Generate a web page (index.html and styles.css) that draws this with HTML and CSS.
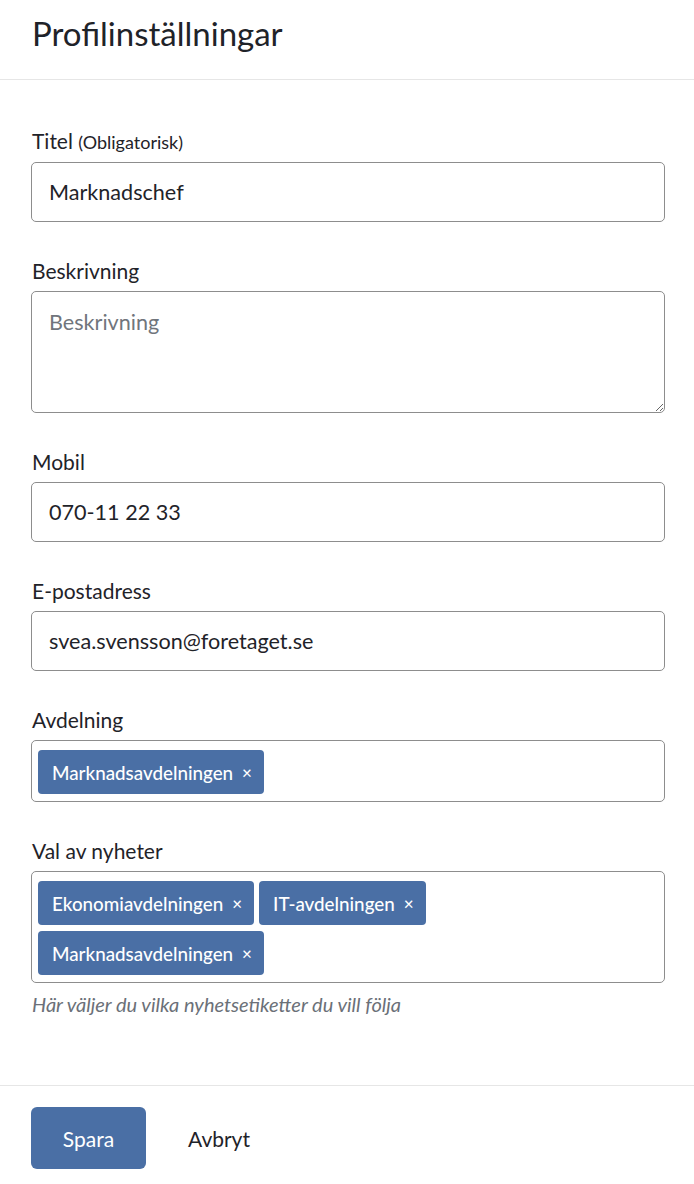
FILE: index.html
```html
<!DOCTYPE html>
<html lang="sv">
<head>
<meta charset="utf-8">
<title>Profilinställningar</title>
<link rel="stylesheet" href="styles.css">
</head>
<body>
<div class="page">
  <header class="page-header">
    <h1 class="page-title">Profilinställningar</h1>
  </header>
  <form class="form">
    <div class="field">
      <label class="label" for="titel">Titel <span class="label-note">(Obligatorisk)</span></label>
      <input class="input" id="titel" type="text" value="Marknadschef">
    </div>
    <div class="field">
      <label class="label" for="beskrivning">Beskrivning</label>
      <textarea class="input textarea" id="beskrivning" placeholder="Beskrivning"></textarea>
    </div>
    <div class="field">
      <label class="label" for="mobil">Mobil</label>
      <input class="input" id="mobil" type="text" value="070-11 22 33">
    </div>
    <div class="field">
      <label class="label" for="epost">E-postadress</label>
      <input class="input" id="epost" type="text" value="svea.svensson@foretaget.se">
    </div>
    <div class="field">
      <label class="label" for="avdelning">Avdelning</label>
      <div class="multiselect">
        <span class="tag">Marknadsavdelningen <span class="tag-remove">×</span></span>
        <input class="ms-search" id="avdelning" type="text" aria-label="Sök avdelning">
      </div>
    </div>
    <div class="field field-last">
      <label class="label" for="nyheter">Val av nyheter</label>
      <div class="multiselect">
        <span class="tag">Ekonomiavdelningen <span class="tag-remove">×</span></span>
        <span class="tag">IT-avdelningen <span class="tag-remove">×</span></span>
        <span class="tag">Marknadsavdelningen <span class="tag-remove">×</span></span>
        <input class="ms-search" id="nyheter" type="text" aria-label="Sök nyheter">
      </div>
      <p class="help">Här väljer du vilka nyhetsetiketter du vill följa</p>
    </div>
  </form>
  <footer class="page-footer">
    <button class="btn btn-primary" type="button">Spara</button>
    <button class="btn btn-link" type="button">Avbryt</button>
  </footer>
</div>
</body>
</html>
```

FILE: styles.css
```css
* {
  box-sizing: border-box;
}

html, body {
  margin: 0;
  padding: 0;
  background: #ffffff;
}

body {
  font-family: "Lato", "Open Sans", sans-serif;
  color: #1f2329;
  font-size: 22px;
}

.page {
  width: 694px;
  min-height: 1184px;
  display: flex;
  flex-direction: column;
}

.page-header {
  height: 80px;
  border-bottom: 1px solid #e6e6e6;
  padding: 13px 32px 0;
}

.page-title {
  margin: 0;
  font-size: 33px;
  font-weight: 400;
  line-height: 40px;
  color: #1f2329;
}

.form {
  padding: 48px 29px 40px 31px;
  flex: 1;
}

.field {
  display: flex;
  flex-direction: column;
  margin-bottom: 36px;
}

.field-last {
  margin-bottom: 0;
}

.label {
  display: block;
  font-size: 21px;
  line-height: 26px;
  margin: 0 0 7px 1px;
  color: #1f2329;
}

.label-note {
  font-size: 18px;
}

.input {
  display: block;
  width: 100%;
  height: 60px;
  border: 1px solid #8d8d8d;
  border-radius: 5px;
  padding: 0 17px;
  font-family: inherit;
  font-size: 21.6px;
  color: #1f2329;
  background: #ffffff;
  outline: none;
}

.textarea {
  height: 122px;
  padding: 14px 17px;
  line-height: 1.5;
  resize: vertical;
}

.textarea::placeholder {
  color: #70757c;
  opacity: 1;
}

.multiselect {
  display: flex;
  flex-wrap: wrap;
  row-gap: 6px;
  padding: 9px 6px 7px;
  border: 1px solid #8d8d8d;
  border-radius: 5px;
}

.tag {
  display: inline-flex;
  align-items: center;
  height: 44px;
  margin-right: 5px;
  padding: 0 12px 0 14px;
  background: #4a6fa5;
  color: #ffffff;
  border-radius: 4px;
  font-size: 18.8px;
  font-weight: 500;
  white-space: nowrap;
}

.tag-remove {
  margin-left: 9px;
  font-size: 17px;
}

.ms-search {
  flex: 1 0 40px;
  min-width: 40px;
  height: 44px;
  border: none;
  outline: none;
  background: transparent;
  font-family: inherit;
  font-size: 20px;
  padding: 0;
}

.help {
  margin: 8px 0 0 1px;
  font-size: 20px;
  font-style: italic;
  color: #6b7078;
  line-height: 26px;
}

.page-footer {
  border-top: 1px solid #e6e6e6;
  padding: 21px 31px 15px;
  display: flex;
  align-items: center;
  gap: 22px;
}

.btn {
  font-family: inherit;
  font-size: 21px;
  border: none;
  cursor: pointer;
  height: 62px;
}

.btn-primary {
  width: 115px;
  background: #4a6fa5;
  color: #ffffff;
  border-radius: 6px;
}

.btn-link {
  background: transparent;
  color: #1f2329;
  padding: 0 20px;
}
```
